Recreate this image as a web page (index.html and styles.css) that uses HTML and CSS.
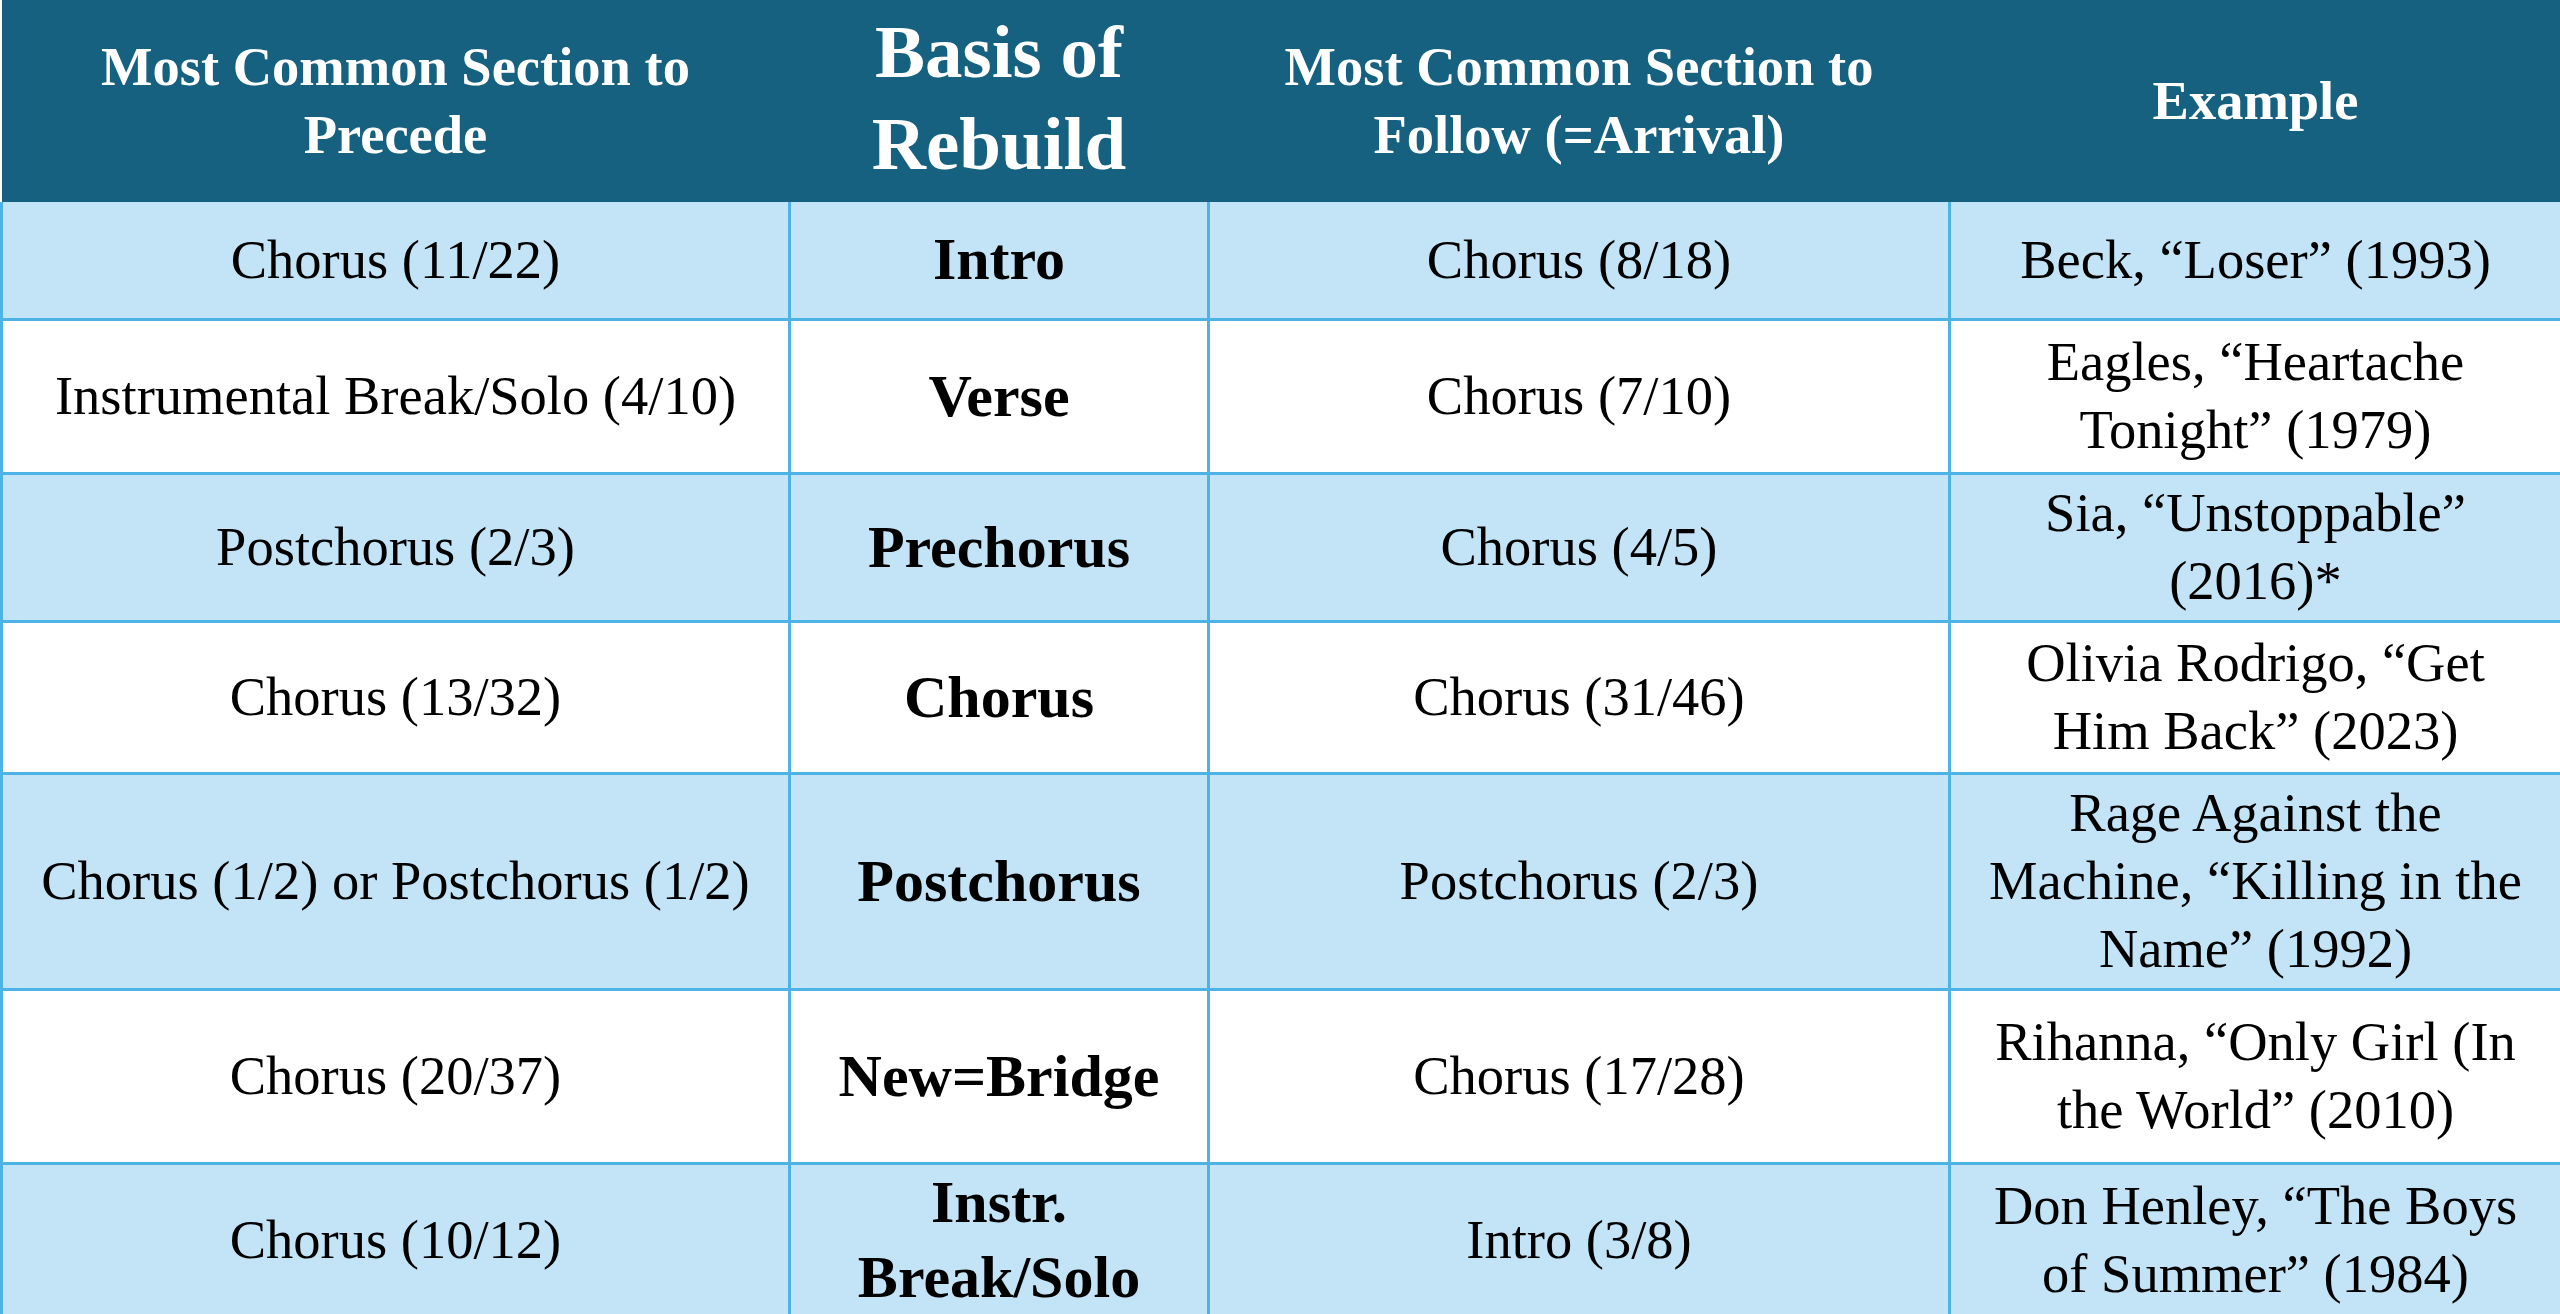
FILE: index.html
```html
<!DOCTYPE html>
<html lang="en">
<head>
<meta charset="utf-8">
<title>Basis of Rebuild</title>
<link rel="stylesheet" href="styles.css">
</head>
<body>
<table class="rebuild">
  <colgroup>
    <col class="c-precede">
    <col class="c-basis">
    <col class="c-follow">
    <col class="c-example">
  </colgroup>
  <thead>
    <tr class="head">
      <th>Most Common Section to<br>Precede</th>
      <th class="big">Basis of<br>Rebuild</th>
      <th>Most Common Section to<br>Follow (=Arrival)</th>
      <th>Example</th>
    </tr>
  </thead>
  <tbody>
    <tr class="r1 tint">
      <td>Chorus (11/22)</td>
      <td class="basis">Intro</td>
      <td>Chorus (8/18)</td>
      <td>Beck, “Loser” (1993)</td>
    </tr>
    <tr class="r2">
      <td>Instrumental Break/Solo (4/10)</td>
      <td class="basis">Verse</td>
      <td>Chorus (7/10)</td>
      <td>Eagles, “Heartache<br>Tonight” (1979)</td>
    </tr>
    <tr class="r3 tint">
      <td>Postchorus (2/3)</td>
      <td class="basis">Prechorus</td>
      <td>Chorus (4/5)</td>
      <td>Sia, “Unstoppable”<br>(2016)*</td>
    </tr>
    <tr class="r4">
      <td>Chorus (13/32)</td>
      <td class="basis">Chorus</td>
      <td>Chorus (31/46)</td>
      <td>Olivia Rodrigo, “Get<br>Him Back” (2023)</td>
    </tr>
    <tr class="r5 tint">
      <td>Chorus (1/2) or Postchorus (1/2)</td>
      <td class="basis">Postchorus</td>
      <td>Postchorus (2/3)</td>
      <td>Rage Against the<br>Machine, “Killing in the<br>Name” (1992)</td>
    </tr>
    <tr class="r6">
      <td>Chorus (20/37)</td>
      <td class="basis">New=Bridge</td>
      <td>Chorus (17/28)</td>
      <td>Rihanna, “Only Girl (In<br>the World” (2010)</td>
    </tr>
    <tr class="r7 tint">
      <td>Chorus (10/12)</td>
      <td class="basis">Instr.<br>Break/Solo</td>
      <td>Intro (3/8)</td>
      <td>Don Henley, “The Boys<br>of Summer” (1984)</td>
    </tr>
  </tbody>
</table>
</body>
</html>
```

FILE: styles.css
```css
html, body {
  margin: 0;
  padding: 0;
  background: #ffffff;
}

body {
  font-family: "Liberation Serif", "Times New Roman", serif;
  color: #000000;
}

.rebuild {
  width: 2560px;
  table-layout: fixed;
  border-collapse: collapse;
  border-spacing: 0;
}

.c-precede { width: 788px; }
.c-basis { width: 419px; }
.c-follow { width: 741px; }
.c-example { width: 612px; }

.head {
  height: 202px;
  background: #166080;
}

.head th {
  color: #ffffff;
  font-weight: bold;
  font-size: 54.5px;
  line-height: 68px;
  text-align: center;
  vertical-align: middle;
  padding: 0 6px;
  border: none;
}

.head th.big {
  font-size: 75px;
  line-height: 92px;
  padding-bottom: 6px;
}

.rebuild td {
  font-size: 54.5px;
  line-height: 68px;
  text-align: center;
  vertical-align: middle;
  padding: 0 6px;
  border: 3px solid #4db2e4;
  background: #ffffff;
}

.rebuild tr.tint td {
  background: #c2e4f6;
}

.rebuild tbody tr:first-child td {
  border-top: none;
}

.rebuild td.basis {
  font-weight: bold;
  font-size: 60px;
  line-height: 75px;
}

.r1 { height: 117px; }
.r2 { height: 154px; }
.r3 { height: 148px; }
.r4 { height: 152px; }
.r5 { height: 216px; }
.r6 { height: 174px; }
.r7 { height: 150px; }
```
